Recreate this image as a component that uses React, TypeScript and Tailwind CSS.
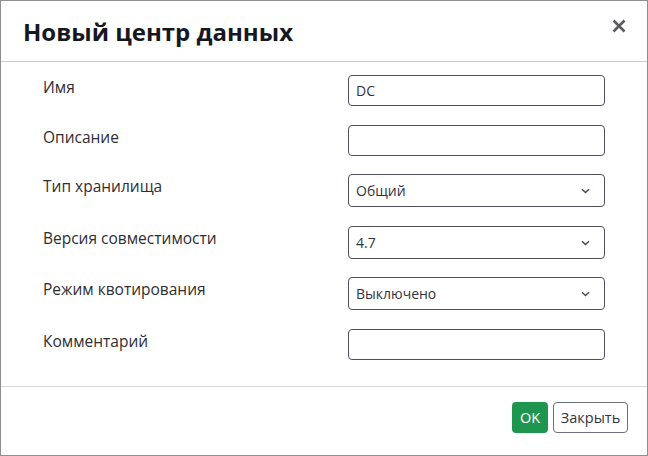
import React from "react";

const font = { fontFamily: '"Open Sans", "Noto Sans", sans-serif' };

function Chevron() {
  return (
    <svg width="9" height="6" viewBox="0 0 9 6" className="absolute right-[14px] top-1/2 -translate-y-1/2">
      <path d="M1 1.2 L4.5 4.6 L8 1.2" fill="none" stroke="#4a4a55" strokeWidth="1.4" />
    </svg>
  );
}

function TextField({ value }: { value?: string }) {
  return (
    <div className="w-[257px] h-[31px] border border-[#4f4f60] rounded-[4px] flex items-center pl-[7px] text-[14px] text-[#333340]">
      {value}
    </div>
  );
}

function SelectField({ value }: { value: string }) {
  return (
    <div className="relative w-[257px] h-[33px] border border-[#4f4f60] rounded-[4px] flex items-center pl-[7px] text-[14px] text-[#333340]">
      {value}
      <Chevron />
    </div>
  );
}

function Row({ label, children, mb }: { label: string; children: React.ReactNode; mb: string }) {
  return (
    <div className={`flex items-start ${mb}`}>
      <div className="w-[305px] pt-[2px] text-[15.5px] leading-5 text-[#2e2e33]">{label}</div>
      {children}
    </div>
  );
}

export default function App() {
  return (
    <div style={font} className="w-[648px] h-[456px] bg-white border border-[#8f8f8f] flex flex-col">
      <div className="h-[61px] shrink-0 flex items-center justify-between pl-[22px] pr-[21px] border-b border-[#c9c9d2]">
        <div className="text-[24px] font-bold text-[#17171f] pt-[1px]">Новый центр данных</div>
        <svg width="14" height="14" viewBox="0 0 14 14" className="mt-[-10px]">
          <path d="M1.5 1.5 L12.5 12.5 M12.5 1.5 L1.5 12.5" stroke="#5a5a5e" strokeWidth="2.6" strokeLinecap="butt" />
        </svg>
      </div>
      <div className="flex-1 pt-[13px] pl-[42px]">
        <Row label="Имя" mb="mb-[19px]">
          <TextField value="DC" />
        </Row>
        <Row label="Описание" mb="mb-[18px]">
          <TextField />
        </Row>
        <Row label="Тип хранилища" mb="mb-[19px]">
          <SelectField value="Общий" />
        </Row>
        <Row label="Версия совместимости" mb="mb-[18px]">
          <SelectField value="4.7" />
        </Row>
        <Row label="Режим квотирования" mb="mb-[19px]">
          <SelectField value="Выключено" />
        </Row>
        <Row label="Комментарий" mb="mb-0">
          <TextField />
        </Row>
      </div>
      <div className="h-[69px] shrink-0 border-t border-[#dcdcdc] flex justify-end items-start pt-[15px] pr-[19px] gap-[5px]">
        <button className="h-[31px] w-[36px] rounded-[4px] bg-[#1f9650] text-white text-[14.5px] flex items-center justify-center">
          OK
        </button>
        <button className="h-[31px] w-[75px] rounded-[4px] border border-[#6e6e7e] bg-white text-[#333340] text-[14.5px] flex items-center justify-center">
          Закрыть
        </button>
      </div>
    </div>
  );
}
